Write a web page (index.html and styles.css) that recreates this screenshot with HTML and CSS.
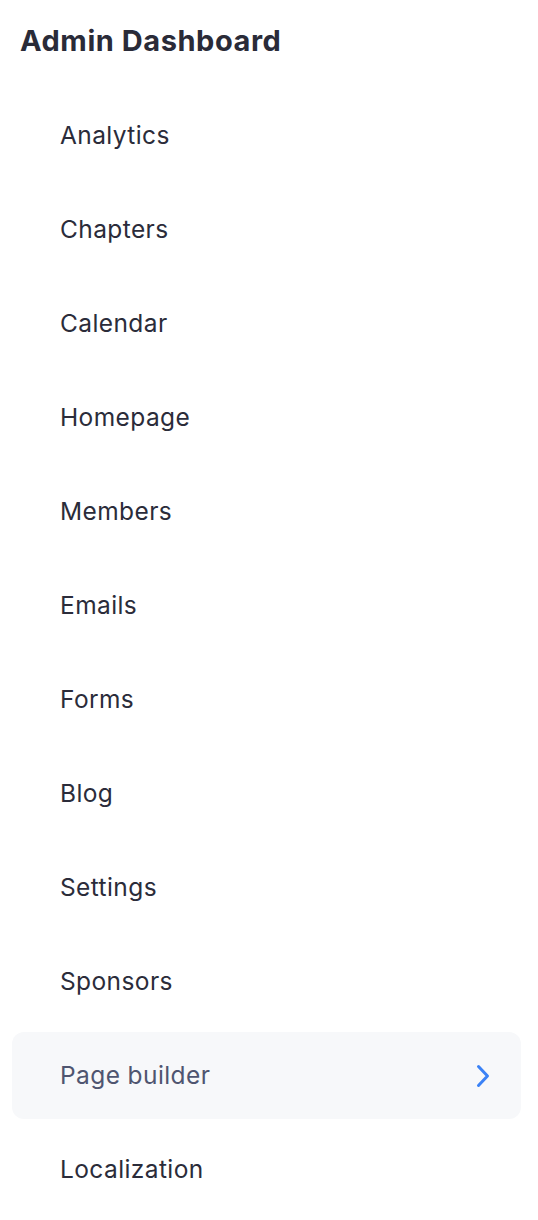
FILE: index.html
```html
<!DOCTYPE html>
<html>
<head>
<meta charset="utf-8">
<link rel="stylesheet" href="styles.css">
</head>
<body>
<div class="sidebar">
  <h1 class="title">Admin Dashboard</h1>
  <nav class="nav">
    <a class="item">Analytics</a>
    <a class="item">Chapters</a>
    <a class="item">Calendar</a>
    <a class="item">Homepage</a>
    <a class="item">Members</a>
    <a class="item">Emails</a>
    <a class="item">Forms</a>
    <a class="item">Blog</a>
    <a class="item">Settings</a>
    <a class="item">Sponsors</a>
    <a class="item active">Page builder
      <svg class="chev" width="16" height="24" viewBox="0 0 16 24"><path d="M3.5 2.5 L12.5 12 L3.5 21.5" fill="none" stroke="#3b82f6" stroke-width="3" stroke-linecap="round" stroke-linejoin="round"/></svg>
    </a>
    <a class="item">Localization</a>
  </nav>
</div>
</body>
</html>
```
FILE: styles.css
```css
html, body {
  margin: 0;
  padding: 0;
  background: #ffffff;
}
body {
  font-family: Inter, Lato, sans-serif;
  color: #2b2c3a;
}
.sidebar {
  width: 538px;
}
.title {
  margin: 0;
  height: 92px;
  box-sizing: border-box;
  padding: 22px 0 0 20px;
  font-size: 29px;
  line-height: 38px;
  font-weight: 700;
  letter-spacing: 0.55px;
  color: #2a2b38;
}
.nav {
  display: flex;
  flex-direction: column;
  gap: 7px;
  padding: 0 17px 0 12px;
}
.item {
  display: flex;
  align-items: center;
  justify-content: space-between;
  height: 87px;
  box-sizing: border-box;
  padding: 0 30px 2px 48px;
  border-radius: 12px;
  font-size: 24.5px;
  letter-spacing: 0.4px;
  color: #2b2c3a;
}
.item.active {
  background: #f7f8fa;
  color: #4f5570;
}
.chev {
  display: block;
  margin-top: 2px;
}
```
